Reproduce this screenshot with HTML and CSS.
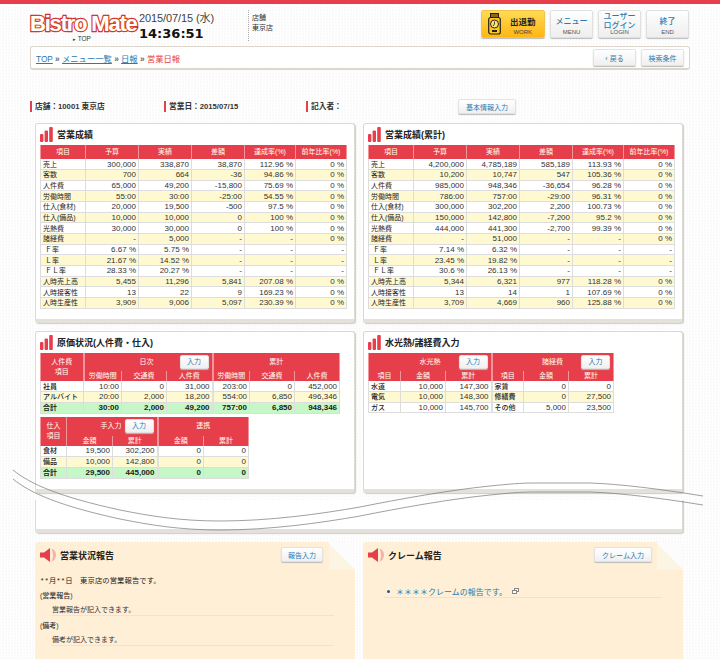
FILE: index.html
```html
<!DOCTYPE html>
<html lang="ja">

<head>
    <meta charset="UTF-8">
    <meta name="viewport" content="width=device-width, initial-scale=1.0">
    <title>Bistro Mate 営業日報</title>
    <link rel="stylesheet" href="styles.css">
</head>

<body>
    <div id="topbar"></div>

    <div id="omotac">
        <div id="header">
            <div id="logo">
                <div id="logo_txt">Bistro Mate</div>
                <div id="logo_top"><span class="strelica">▸</span> TOP</div>
            </div>
            <div id="datum">
                <div id="datum_dan">2015/07/15 (水)</div>
                <div id="datum_vreme">14:36:51</div>
            </div>
            <div id="tenpo">店舗<br>東京店</div>
            <div id="nav">
                <a class="navbtn work">
                    <svg width="13" height="22" viewBox="0 0 13 22">
                        <rect x="2.5" y="0.5" width="8" height="4" fill="#8a6a10" stroke="#222"/>
                        <rect x="0.7" y="4.5" width="11.6" height="16.5" rx="2" fill="#ffc61a" stroke="#222" stroke-width="1.2"/>
                        <circle cx="6.5" cy="11" r="4" fill="#ffe27a" stroke="#222"/>
                        <path d="M6.5 8.5V11L5 13" fill="none" stroke="#222" stroke-width=".8"/>
                        <rect x="4" y="17" width="5" height="2" fill="#222"/>
                    </svg>
                    <span class="work_txt"><b>出退勤</b><small>WORK</small></span>
                </a>
                <a class="navbtn"><span class="nav_jp j1">メニュー</span><small>MENU</small></a>
                <a class="navbtn"><span class="nav_jp">ユーザー<br>ログイン</span><small>LOGIN</small></a>
                <a class="navbtn"><span class="nav_jp j1">終了</span><small>END</small></a>
            </div>
        </div>

        <div id="breadcrumb">
            <div id="putanja">
                <a>TOP</a> <span class="sep">»</span> <a>メニュー一覧</a> <span class="sep">»</span> <a>日報</a> <span class="sep">»</span> <span class="trenutna">営業日報</span>
            </div>
            <a class="btn bc_btn">‹ 戻る</a>
            <a class="btn bc_btn">検索条件</a>
        </div>

        <div id="info">
            <div class="info_item i1">店舗：10001 東京店</div>
            <div class="info_item i2">営業日：2015/07/15</div>
            <div class="info_item i3">記入者：</div>
            <a class="btn info_btn">基本情報入力</a>
        </div>

        <div class="red">
            <div class="panel p1">
                <h2 class="naslov"><svg class="bars" width="14" height="15" viewBox="0 0 14 15"><rect y="7" width="3.4" height="8" rx="1" fill="#e63e4a"/><rect x="4.6" y="3.6" width="3.4" height="11.4" rx="1" fill="#e63e4a"/><rect x="9.2" width="3.6" height="15" rx="1" fill="#e63e4a"/></svg>営業成績</h2>
                <table class="tabela t_prodaja">
                    <colgroup><col class="c45"><col class="c53"><col class="c53"><col class="c53"><col class="c51"><col class="c51"></colgroup>
                    <tr class="h14"><th>項目</th><th>予算</th><th>実績</th><th>差額</th><th>達成率(%)</th><th>前年比率(%)</th></tr>
                    <tr><td>売上</td><td>300,000</td><td>338,870</td><td>38,870</td><td>112.96 %</td><td>0 %</td></tr>
                    <tr class="y"><td>客数</td><td>700</td><td>664</td><td>-36</td><td>94.86 %</td><td>0 %</td></tr>
                    <tr><td>人件費</td><td>65,000</td><td>49,200</td><td>-15,800</td><td>75.69 %</td><td>0 %</td></tr>
                    <tr class="y"><td>労働時間</td><td>55:00</td><td>30:00</td><td>-25:00</td><td>54.55 %</td><td>0 %</td></tr>
                    <tr><td>仕入(食材)</td><td>20,000</td><td>19,500</td><td>-500</td><td>97.5 %</td><td>0 %</td></tr>
                    <tr class="y"><td>仕入(備品)</td><td>10,000</td><td>10,000</td><td>0</td><td>100 %</td><td>0 %</td></tr>
                    <tr><td>光熱費</td><td>30,000</td><td>30,000</td><td>0</td><td>100 %</td><td>0 %</td></tr>
                    <tr class="y"><td>諸経費</td><td>-</td><td>5,000</td><td>-</td><td>-</td><td>0 %</td></tr>
                    <tr><td>&nbsp;Ｆ率</td><td>6.67 %</td><td>5.75 %</td><td>-</td><td>-</td><td>-</td></tr>
                    <tr class="y"><td>&nbsp;Ｌ率</td><td>21.67 %</td><td>14.52 %</td><td>-</td><td>-</td><td>-</td></tr>
                    <tr><td>&nbsp;ＦＬ率</td><td>28.33 %</td><td>20.27 %</td><td>-</td><td>-</td><td>-</td></tr>
                    <tr class="y"><td>人時売上高</td><td>5,455</td><td>11,296</td><td>5,841</td><td>207.08 %</td><td>0 %</td></tr>
                    <tr><td>人時接客性</td><td>13</td><td>22</td><td>9</td><td>169.23 %</td><td>0 %</td></tr>
                    <tr class="y"><td>人時生産性</td><td>3,909</td><td>9,006</td><td>5,097</td><td>230.39 %</td><td>0 %</td></tr>
                </table>
            </div>
            <div class="panel p1">
                <h2 class="naslov"><svg class="bars" width="14" height="15" viewBox="0 0 14 15"><rect y="7" width="3.4" height="8" rx="1" fill="#e63e4a"/><rect x="4.6" y="3.6" width="3.4" height="11.4" rx="1" fill="#e63e4a"/><rect x="9.2" width="3.6" height="15" rx="1" fill="#e63e4a"/></svg>営業成績(累計)</h2>
                <table class="tabela t_prodaja">
                    <colgroup><col class="c45"><col class="c53"><col class="c53"><col class="c53"><col class="c51"><col class="c51"></colgroup>
                    <tr class="h14"><th>項目</th><th>予算</th><th>実績</th><th>差額</th><th>達成率(%)</th><th>前年比率(%)</th></tr>
                    <tr><td>売上</td><td>4,200,000</td><td>4,785,189</td><td>585,189</td><td>113.93 %</td><td>0 %</td></tr>
                    <tr class="y"><td>客数</td><td>10,200</td><td>10,747</td><td>547</td><td>105.36 %</td><td>0 %</td></tr>
                    <tr><td>人件費</td><td>985,000</td><td>948,346</td><td>-36,654</td><td>96.28 %</td><td>0 %</td></tr>
                    <tr class="y"><td>労働時間</td><td>786:00</td><td>757:00</td><td>-29:00</td><td>96.31 %</td><td>0 %</td></tr>
                    <tr><td>仕入(食材)</td><td>300,000</td><td>302,200</td><td>2,200</td><td>100.73 %</td><td>0 %</td></tr>
                    <tr class="y"><td>仕入(備品)</td><td>150,000</td><td>142,800</td><td>-7,200</td><td>95.2 %</td><td>0 %</td></tr>
                    <tr><td>光熱費</td><td>444,000</td><td>441,300</td><td>-2,700</td><td>99.39 %</td><td>0 %</td></tr>
                    <tr class="y"><td>諸経費</td><td>-</td><td>51,000</td><td>-</td><td>-</td><td>0 %</td></tr>
                    <tr><td>&nbsp;Ｆ率</td><td>7.14 %</td><td>6.32 %</td><td>-</td><td>-</td><td>-</td></tr>
                    <tr class="y"><td>&nbsp;Ｌ率</td><td>23.45 %</td><td>19.82 %</td><td>-</td><td>-</td><td>-</td></tr>
                    <tr><td>&nbsp;ＦＬ率</td><td>30.6 %</td><td>26.13 %</td><td>-</td><td>-</td><td>-</td></tr>
                    <tr class="y"><td>人時売上高</td><td>5,344</td><td>6,321</td><td>977</td><td>118.28 %</td><td>0 %</td></tr>
                    <tr><td>人時接客性</td><td>13</td><td>14</td><td>1</td><td>107.69 %</td><td>0 %</td></tr>
                    <tr class="y"><td>人時生産性</td><td>3,709</td><td>4,669</td><td>960</td><td>125.88 %</td><td>0 %</td></tr>
                </table>
            </div>
        </div>

        <div class="red red2">
            <div class="panel p2">
                <h2 class="naslov n2"><svg class="bars" width="14" height="15" viewBox="0 0 14 15"><rect y="7" width="3.4" height="8" rx="1" fill="#e63e4a"/><rect x="4.6" y="3.6" width="3.4" height="11.4" rx="1" fill="#e63e4a"/><rect x="9.2" width="3.6" height="15" rx="1" fill="#e63e4a"/></svg>原価状況(人件費・仕入)</h2>
                <table class="tabela t_kost">
                    <colgroup><col class="c43"><col class="c38"><col class="c45"><col class="c46"><col class="c37"><col class="c45"><col class="c45"></colgroup>
                    <tr class="h18"><th rowspan="2" class="dbl">人件費<br>項目</th><th colspan="3" class="dbl"><div class="hcell g26">日次<a class="btn unos">入力</a></div></th><th colspan="3">累計</th></tr>
                    <tr class="h10"><th>労働時間</th><th>交通費</th><th class="dbl">人件費</th><th>労働時間</th><th>交通費</th><th>人件費</th></tr>
                    <tr><td class="b">社員</td><td>10:00</td><td>0</td><td class="dbl">31,000</td><td>203:00</td><td>0</td><td>452,000</td></tr>
                    <tr class="y"><td class="b">アルバイト</td><td>20:00</td><td>2,000</td><td class="dbl">18,200</td><td>554:00</td><td>6,850</td><td>496,346</td></tr>
                    <tr class="g"><td>合計</td><td>30:00</td><td>2,000</td><td class="dbl">49,200</td><td>757:00</td><td>6,850</td><td>948,346</td></tr>
                </table>
                <table class="tabela t_nabavka">
                    <colgroup><col class="c26"><col class="c46"><col class="c45"><col class="c46"><col class="c45"></colgroup>
                    <tr class="h18"><th rowspan="2">仕入<br>項目</th><th colspan="2" class="dbl"><div class="hcell g3">手入力<a class="btn unos">入力</a></div></th><th colspan="2">連携</th></tr>
                    <tr class="h10"><th>金額</th><th class="dbl">累計</th><th>金額</th><th>累計</th></tr>
                    <tr><td class="b">食材</td><td>19,500</td><td class="dbl">302,200</td><td>0</td><td>0</td></tr>
                    <tr class="y"><td class="b">備品</td><td>10,000</td><td class="dbl">142,800</td><td>0</td><td>0</td></tr>
                    <tr class="g"><td>合計</td><td>29,500</td><td class="dbl">445,000</td><td>0</td><td>0</td></tr>
                </table>
            </div>
            <div class="panel p2">
                <h2 class="naslov n2"><svg class="bars" width="14" height="15" viewBox="0 0 14 15"><rect y="7" width="3.4" height="8" rx="1" fill="#e63e4a"/><rect x="4.6" y="3.6" width="3.4" height="11.4" rx="1" fill="#e63e4a"/><rect x="9.2" width="3.6" height="15" rx="1" fill="#e63e4a"/></svg>水光熱/諸経費入力</h2>
                <table class="tabela t_voda">
                    <colgroup><col class="c32"><col class="c45"><col class="c46"><col class="c32"><col class="c45"><col class="c45"></colgroup>
                    <tr class="h18"><th colspan="3" class="dbl"><div class="hcell g18">水光熱<a class="btn unos">入力</a></div></th><th colspan="3"><div class="hcell g18">諸経費<a class="btn unos">入力</a></div></th></tr>
                    <tr class="h10"><th>項目</th><th>金額</th><th class="dbl">累計</th><th>項目</th><th>金額</th><th>累計</th></tr>
                    <tr><td class="b">水道</td><td>10,000</td><td class="dbl">147,300</td><td class="b">家賃</td><td>0</td><td>0</td></tr>
                    <tr class="y"><td class="b">電気</td><td>10,000</td><td class="dbl">148,300</td><td class="b">修繕費</td><td>0</td><td>27,500</td></tr>
                    <tr><td class="b">ガス</td><td>10,000</td><td class="dbl">145,700</td><td class="b">その他</td><td>5,000</td><td>23,500</td></tr>
                </table>
            </div>
        </div>

        <div id="ostatak"></div>

        <div class="red red3">
            <div class="izvestaj">
                <div class="iz_glava">
                    <h2 class="naslov n3"><svg class="zvuk" width="19" height="16" viewBox="0 0 19 16"><path d="M0 5.5H4L10 1V15L4 10.5H0Z" fill="#e63e4a"/><path d="M11.5 1.5C17.5 3 17.5 13 11.5 14.5C13.5 10 13.5 6 11.5 1.5Z" fill="#f4b3a8"/></svg>営業状況報告</h2>
                    <a class="btn iz_btn">報告入力</a>
                </div>
                <p class="uvod">**月**日　東京店の営業報告です。</p>
                <p class="oznaka">(営業報告)</p>
                <p class="stavka">営業報告が記入できます。</p>
                <p class="oznaka">(備考)</p>
                <p class="stavka">備考が記入できます。</p>
            </div>
            <div class="izvestaj">
                <div class="iz_glava">
                    <h2 class="naslov n3"><svg class="zvuk" width="19" height="16" viewBox="0 0 19 16"><path d="M0 5.5H4L10 1V15L4 10.5H0Z" fill="#e63e4a"/><path d="M11.5 1.5C17.5 3 17.5 13 11.5 14.5C13.5 10 13.5 6 11.5 1.5Z" fill="#f4b3a8"/></svg>クレーム報告</h2>
                    <a class="btn iz_btn kl_btn">クレーム入力</a>
                </div>
                <div class="klejm">
                    <span class="tacka"></span><a>＊＊＊＊クレームの報告です。</a>
                    <svg width="7" height="6" viewBox="0 0 7 6"><rect x="2.5" y=".5" width="4" height="3" fill="none" stroke="#888"/><rect x=".5" y="2.5" width="4" height="3" fill="#fff" stroke="#888"/></svg>
                </div>
            </div>
        </div>
    </div>

    <svg id="talas" width="720" height="659" viewBox="0 0 720 659">
        <path d="M13 470C30 484 60 497 120 510C150 516 180 521 220 521C270 521 320 514 360 507C400 499 450 490 490 486C510 484 520 483 535 483H590C620 484 660 489 703 496" fill="none" stroke="#777" stroke-width=".7"/>
        <path d="M13 479C30 493 60 506 120 519C150 525 180 530 220 530C270 530 320 523 360 516C400 508 450 499 490 495C510 493 520 492 535 492H590C620 493 660 498 703 505" fill="none" stroke="#777" stroke-width=".7"/>
    </svg>
</body>

</html>
```

FILE: styles.css
```css
body {
    margin: 0;
    height: 659px;
    overflow: hidden;
    position: relative;
    background: repeating-conic-gradient(#fff 0 25%, #f9f9f9 0 50%) 0 0 / 3px 3px;
    font-family: "Liberation Sans", "Noto Sans CJK JP", sans-serif;
    font-size: 7px;
    color: #333;
}

a {
    color: #2a7ab0;
}

#topbar {
    height: 4px;
    background-color: #e63e4a;
}

#omotac {
    width: 660px;
    margin-left: 30px;
}

/* header */
#header {
    display: flex;
    height: 42px;
}

#logo {
    width: 109px;
    padding-top: 8px;
    box-sizing: border-box;
}

#logo_txt {
    height: 23px;
    font-size: 22px;
    line-height: 23px;
    font-weight: bold;
    letter-spacing: -1.2px;
    white-space: nowrap;
    color: #fff;
    -webkit-text-stroke: 2.4px #cc2233;
    paint-order: stroke fill;
    text-shadow: 0 0 1.5px #f0a020;
}

#logo_top {
    padding-left: 43px;
    font-size: 6.5px;
    line-height: 8px;
}

.strelica {
    font-size: 5px;
}

#datum {
    width: 109px;
    padding-top: 8px;
    box-sizing: border-box;
}

#datum_dan {
    font-size: 11px;
    line-height: 12px;
    letter-spacing: -.1px;
    color: #444;
}

#datum_vreme {
    margin-top: 2px;
    font-family: "DejaVu Sans", sans-serif;
    font-weight: bold;
    font-size: 13px;
    line-height: 15px;
    color: #111;
}

#tenpo {
    width: 60px;
    height: 31px;
    margin-top: 6px;
    padding: 3px 0 0 3px;
    box-sizing: border-box;
    border-left: 1px dotted #aaa;
    font-size: 7px;
    line-height: 9.5px;
}

#nav {
    display: flex;
    gap: 5px;
    margin: 6px 1px 0 auto;
}

.navbtn {
    width: 43px;
    height: 28px;
    box-sizing: border-box;
    display: flex;
    flex-direction: column;
    align-items: center;
    justify-content: flex-end;
    padding-bottom: 1px;
    background: linear-gradient(#fff, #eeeeee);
    border: 1px solid #e0e0e0;
    border-radius: 2px;
    box-shadow: 0 1px 1px #bbb;
    text-align: center;
}

.navbtn small {
    font-size: 6px;
    line-height: 7px;
    color: #555;
}

.nav_jp {
    font-size: 8px;
    line-height: 8.5px;
    font-weight: 500;
    margin-bottom: -1px;
}

.j1 {
    margin-bottom: 3px;
}

.work {
    width: 64px;
    flex-direction: row;
    justify-content: flex-start;
    align-items: center;
    gap: 9px;
    padding: 0 0 0 6px;
    background: linear-gradient(#ffdb55, #ffb612);
    border-color: #f3c34a;
}

.work_txt {
    display: flex;
    flex-direction: column;
    align-items: center;
    margin-top: 3px;
    color: #222;
}

.work_txt b {
    font-size: 8.5px;
    line-height: 12px;
}

.work_txt small {
    color: #444;
    padding-top: 1px;
}

/* breadcrumb */
#breadcrumb {
    display: flex;
    align-items: center;
    gap: 5px;
    height: 24px;
    box-sizing: border-box;
    padding-right: 5px;
    background-color: #fff;
    border: 1px solid #ddd6cc;
    border-bottom-width: 2px;
    border-radius: 3px;
}

#putanja {
    flex: 1;
    padding-left: 5px;
    font-size: 8.3px;
}

#putanja a {
    text-decoration: underline;
}

.sep {
    color: #666;
    font-weight: bold;
}

.trenutna {
    color: #e63e4a;
}

.btn {
    display: flex;
    align-items: center;
    justify-content: center;
    box-sizing: border-box;
    background: linear-gradient(#fff, #f0f0f0);
    border: 1px solid #e2e2e2;
    border-radius: 2px;
    box-shadow: 0 1px 1px #bbb;
    font-size: 7px;
    color: #2a7ab0;
    white-space: nowrap;
}

.bc_btn {
    width: 43px;
    height: 17px;
}

/* info */
#info {
    display: flex;
    align-items: center;
    height: 15px;
    margin-top: 29px;
}

.info_item {
    box-sizing: border-box;
    height: 11px;
    line-height: 11px;
    padding-left: 3px;
    border-left: 2px solid #e63e4a;
    font-weight: bold;
    font-size: 7.7px;
    white-space: nowrap;
}

.i1 {
    width: 134px;
}

.i2 {
    width: 142px;
}

.i3 {
    width: 152px;
}

.info_btn {
    width: 58px;
    height: 15px;
}

/* panels */
.red {
    display: flex;
    gap: 8px;
    margin: 9px 0 0 5px;
}

.red2 {
    margin-top: 8px;
}

.red3 {
    margin-top: 9px;
}

.panel {
    width: 320px;
    box-sizing: border-box;
    padding: 0 4px;
    background-color: #fff;
    border: 1px solid #dcd8d2;
    border-bottom: 4px solid #e4e0da;
    border-radius: 3px;
    box-shadow: 1px 1px 1px #ccc;
}

.p1 {
    height: 200px;
}

.p2 {
    height: 162px;
}

.naslov {
    display: flex;
    align-items: center;
    gap: 3px;
    height: 21px;
    margin: 0;
    font-size: 9px;
    font-weight: bold;
    color: #222;
}

.n2 {
    height: 21px;
}

.bars {
    flex: none;
}

.tabela {
    table-layout: fixed;
    border-collapse: collapse;
    font-size: 8px;
    color: #333;
}

.t_prodaja {
    width: 307px;
}

.t_kost {
    width: 299px;
}

.t_nabavka {
    width: 208px;
    margin-top: 3px;
}

.t_voda {
    width: 245px;
}

.c26 { width: 26px; }
.c32 { width: 32px; }
.c37 { width: 37px; }
.c38 { width: 38px; }
.c43 { width: 43px; }
.c45 { width: 45px; }
.c46 { width: 46px; }
.c51 { width: 51px; }
.c53 { width: 53px; }

.tabela th {
    padding: 0;
    background-color: #e63e4a;
    border-left: 1px solid #f2949a;
    border-right: 1px solid #f2949a;
    color: #ffe;
    font-size: 7px;
    font-weight: normal;
    line-height: 10px;
    text-align: center;
}

.tabela td {
    height: 10.67px;
    padding: 0 2px;
    box-sizing: border-box;
    border: 1px solid #ddd;
    border-top-width: 0;
    line-height: 9px;
    text-align: right;
    white-space: nowrap;
    overflow: hidden;
}

.tabela td:first-child {
    text-align: left;
    font-size: 7px;
    color: #222;
}

.tabela td.b {
    text-align: left;
    font-size: 7px;
    font-weight: 500;
    color: #222;
}

.tabela .y td {
    background-color: #fff9d2;
}

.tabela .g td {
    background-color: #c6f7c6;
    font-weight: bold;
    color: #222;
    height: 11px;
}

.tabela .dbl {
    border-right: 2px solid #e0e0e0;
}

.tabela th.dbl {
    border-right-color: #f2949a;
}

.h14 th {
    height: 14px;
}

.h18 th {
    height: 18px;
}

.t_nabavka .h18 th {
    height: 19px;
}

.h10 th {
    height: 10px;
}

.hcell {
    display: flex;
    align-items: center;
    justify-content: flex-end;
    padding-right: 3px;
}

.g26 {
    gap: 26px;
}

.g18 {
    gap: 18px;
}

.g3 {
    gap: 3px;
}

.unos {
    width: 29px;
    height: 14px;
}

#ostatak {
    height: 33px;
    margin: 7px 7px 0 5px;
    background-color: #fff;
    border: 1px solid #dcd8d2;
    border-top: none;
    border-bottom: 4px solid #e4e0da;
    border-radius: 0 0 3px 3px;
    box-sizing: border-box;
    box-shadow: 1px 1px 1px #ccc;
}

/* reports */
.izvestaj {
    position: relative;
    width: 320px;
    height: 117px;
    box-sizing: border-box;
    padding: 0 22px 0 5px;
    background-color: #feefd6;
    border-radius: 3px 0 0 0;
}

.izvestaj::after {
    content: "";
    position: absolute;
    top: 0;
    right: 0;
    width: 26px;
    height: 28px;
    background: linear-gradient(45deg, #fdf5e3 50%, #fcfcfc 50%);
}

.iz_glava {
    display: flex;
    align-items: center;
    justify-content: space-between;
    height: 26px;
    box-sizing: border-box;
}

.n3 {
    height: 22px;
    gap: 1px;
}

.zvuk {
    flex: none;
}

.iz_btn {
    width: 42px;
    height: 15px;
    align-self: flex-start;
    margin: 5px 10px 0 0;
}

.kl_btn {
    width: 58px;
    margin-right: 9px;
}

.uvod {
    margin: 8px 0 0;
    font-family: "Liberation Mono", "Noto Sans CJK JP", monospace;
    font-size: 7.3px;
    line-height: 10px;
    letter-spacing: .1px;
    color: #222;
}

.oznaka {
    margin: 4.5px 0 0;
    font-size: 7px;
    line-height: 10px;
    font-weight: 500;
}

.stavka {
    margin: 4.5px 0 0 11px;
    padding: 0 0 0 1px;
    width: 282px;
    border-bottom: 1px solid #eee5d0;
    font-size: 7px;
    line-height: 10px;
}

.klejm {
    display: flex;
    align-items: flex-end;
    width: 275px;
    height: 13px;
    margin: 16px 0 0 16px;
    padding-left: 3px;
    border-bottom: 1px solid #e8e5d8;
    font-size: 8px;
}

.klejm svg {
    margin: 0 0 3px 5px;
}

.tacka {
    width: 3px;
    height: 3px;
    margin: 0 6px 4px 0;
    border-radius: 50%;
    background-color: #1a5a9a;
}

#talas {
    position: absolute;
    left: 0;
    top: 0;
    pointer-events: none;
}
```
